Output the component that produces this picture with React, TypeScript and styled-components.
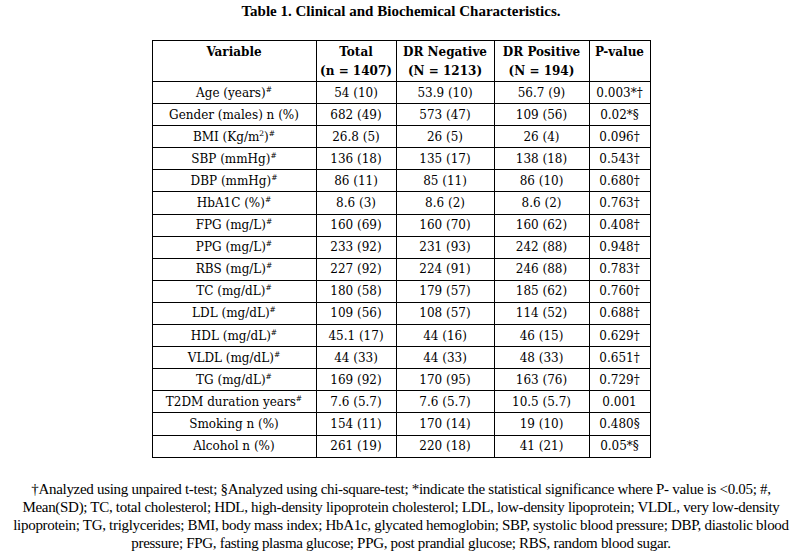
import React from 'react';
import styled, { createGlobalStyle } from 'styled-components';

const GlobalStyle = createGlobalStyle`
  html, body {
    margin: 0;
    padding: 0;
    background: #ffffff;
  }
  body {
    font-family: "Liberation Serif", "DejaVu Serif", serif;
    color: #000;
  }
`;

const Page = styled.div`
  width: 802px;
  display: flex;
  flex-direction: column;
  align-items: center;
`;

const Title = styled.h1`
  margin: 2px 0 0;
  font-size: 15px;
  font-weight: bold;
  line-height: 18px;
  height: 21px;
  text-align: center;
`;

const Table = styled.table`
  margin-top: 17px;
  width: 499px;
  table-layout: fixed;
  border-collapse: collapse;
  font-family: "DejaVu Serif", "Liberation Serif", serif;
  font-size: 12px;
`;

const HeadCell = styled.th`
  height: 40px;
  padding: 2px 0 0;
  box-sizing: border-box;
  border: 1px solid #000;
  font-weight: bold;
  font-size: 12px;
  line-height: 19px;
  vertical-align: top;
  text-align: center;
  white-space: nowrap;
`;

const Cell = styled.td`
  height: 21.1px;
  padding: 0;
  border: 1px solid #000;
  line-height: 18px;
  text-align: center;
  white-space: nowrap;
`;

const Sup = styled.sup`
  font-size: 7.5px;
  line-height: 0;
  vertical-align: 5px;
`;

const Note = styled.p`
  margin: 22px 0 0;
  width: 802px;
  font-size: 15px;
  line-height: 18.3px;
  text-align: center;
  letter-spacing: -0.3px;
  white-space: nowrap;
`;

const columns = [
  { label: 'Variable', sub: '', w: 164 },
  { label: 'Total', sub: '(n = 1407)', w: 80 },
  { label: 'DR Negative', sub: '(N = 1213)', w: 98 },
  { label: 'DR Positive', sub: '(N = 194)', w: 95 },
  { label: 'P-value', sub: '', w: 61 },
];

type Row = { name: string; mark?: boolean; sup?: string; vals: string[] };

const rows: Row[] = [
  { name: 'Age (years)', mark: true, vals: ['54 (10)', '53.9 (10)', '56.7 (9)', '0.003*†'] },
  { name: 'Gender (males) n (%)', vals: ['682 (49)', '573 (47)', '109 (56)', '0.02*§'] },
  { name: 'BMI (Kg/m', sup: '2', mark: true, vals: ['26.8 (5)', '26 (5)', '26 (4)', '0.096†'] },
  { name: 'SBP (mmHg)', mark: true, vals: ['136 (18)', '135 (17)', '138 (18)', '0.543†'] },
  { name: 'DBP (mmHg)', mark: true, vals: ['86 (11)', '85 (11)', '86 (10)', '0.680†'] },
  { name: 'HbA1C (%)', mark: true, vals: ['8.6 (3)', '8.6 (2)', '8.6 (2)', '0.763†'] },
  { name: 'FPG (mg/L)', mark: true, vals: ['160 (69)', '160 (70)', '160 (62)', '0.408†'] },
  { name: 'PPG (mg/L)', mark: true, vals: ['233 (92)', '231 (93)', '242 (88)', '0.948†'] },
  { name: 'RBS (mg/L)', mark: true, vals: ['227 (92)', '224 (91)', '246 (88)', '0.783†'] },
  { name: 'TC (mg/dL)', mark: true, vals: ['180 (58)', '179 (57)', '185 (62)', '0.760†'] },
  { name: 'LDL (mg/dL)', mark: true, vals: ['109 (56)', '108 (57)', '114 (52)', '0.688†'] },
  { name: 'HDL (mg/dL)', mark: true, vals: ['45.1 (17)', '44 (16)', '46 (15)', '0.629†'] },
  { name: 'VLDL (mg/dL)', mark: true, vals: ['44 (33)', '44 (33)', '48 (33)', '0.651†'] },
  { name: 'TG (mg/dL)', mark: true, vals: ['169 (92)', '170 (95)', '163 (76)', '0.729†'] },
  { name: 'T2DM duration years', mark: true, vals: ['7.6 (5.7)', '7.6 (5.7)', '10.5 (5.7)', '0.001'] },
  { name: 'Smoking n (%)', vals: ['154 (11)', '170 (14)', '19 (10)', '0.480§'] },
  { name: 'Alcohol n (%)', vals: ['261 (19)', '220 (18)', '41 (21)', '0.05*§'] },
];

const noteLines = [
  '†Analyzed using unpaired t-test; §Analyzed using chi-square-test; *indicate the statistical significance where P- value is <0.05; #,',
  'Mean(SD); TC, total cholesterol; HDL, high-density lipoprotein cholesterol; LDL, low-density lipoprotein; VLDL, very low-density',
  'lipoprotein; TG, triglycerides; BMI, body mass index; HbA1c, glycated hemoglobin; SBP, systolic blood pressure; DBP, diastolic blood',
  'pressure; FPG, fasting plasma glucose; PPG, post prandial glucose; RBS, random blood sugar.',
];

export default function App() {
  return (
    <Page>
      <GlobalStyle />
      <Title>Table 1. Clinical and Biochemical Characteristics.</Title>
      <Table>
        <colgroup>
          {columns.map(c => (
            <col key={c.label} style={{ width: c.w }} />
          ))}
        </colgroup>
        <thead>
          <tr>
            {columns.map(c => (
              <HeadCell key={c.label}>
                {c.label}
                {c.sub && <><br />{c.sub}</>}
              </HeadCell>
            ))}
          </tr>
        </thead>
        <tbody>
          {rows.map(r => (
            <tr key={r.name}>
              <Cell>
                {r.name}
                {r.sup && <Sup>{r.sup}</Sup>}
                {r.sup && ')'}
                {r.mark && <Sup>#</Sup>}
              </Cell>
              {r.vals.map((v, i) => (
                <Cell key={i}>{v}</Cell>
              ))}
            </tr>
          ))}
        </tbody>
      </Table>
      <Note>
        {noteLines.map((l, i) => (
          <React.Fragment key={i}>
            {l}
            {i < noteLines.length - 1 && <br />}
          </React.Fragment>
        ))}
      </Note>
    </Page>
  );
}
